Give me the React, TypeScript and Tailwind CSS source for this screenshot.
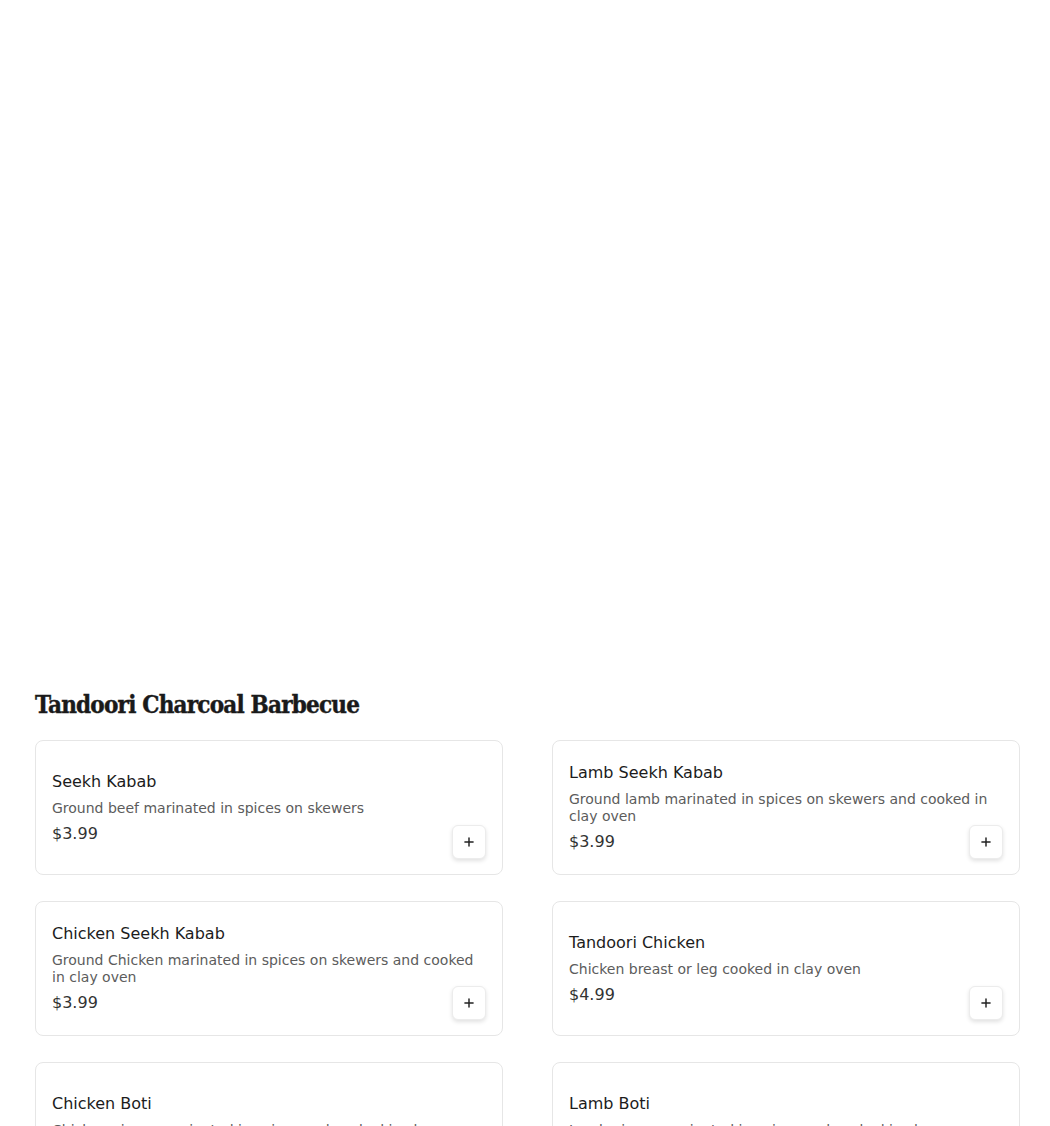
import React from "react";
import { Plus } from "lucide-react";

type Item = { name: string; desc: string; price: string };

const items: Item[] = [
  { name: "Seekh Kabab", desc: "Ground beef marinated in spices on skewers", price: "$3.99" },
  { name: "Lamb Seekh Kabab", desc: "Ground lamb marinated in spices on skewers and cooked in clay oven", price: "$3.99" },
  { name: "Chicken Seekh Kabab", desc: "Ground Chicken marinated in spices on skewers and cooked in clay oven", price: "$3.99" },
  { name: "Tandoori Chicken", desc: "Chicken breast or leg cooked in clay oven", price: "$4.99" },
  { name: "Chicken Boti", desc: "Chicken pieces marinated in spices and cooked in clay oven", price: "$5.99" },
  { name: "Lamb Boti", desc: "Lamb pieces marinated in spices and cooked in clay oven", price: "$6.99" },
];

const MenuCard: React.FC<{ item: Item }> = ({ item }) => (
  <div className="relative flex items-center min-h-[135px] rounded-lg border border-[#e6e6e6] bg-white px-4 py-[15px]">
    <div>
      <h3 className="text-[16px] leading-6 font-medium text-[#1c1c1c]">{item.name}</h3>
      <p className="mt-[6px] text-[14px] leading-[17px] text-[#5c5c5c]">{item.desc}</p>
      <p className="mt-[5px] text-[16px] leading-6 text-[#333]">{item.price}</p>
    </div>
    {/* add button sits over the card corner */}
    <button className="absolute right-4 bottom-[15px] w-[34px] h-[34px] flex items-center justify-center rounded-md border border-[#ececec] bg-white shadow-[0_2px_4px_rgba(0,0,0,0.12)] text-[#222]">
      <Plus className="w-3.5 h-3.5" strokeWidth={2.5} />
    </button>
  </div>
);

export default function App() {
  return (
    <div className="min-h-screen bg-white font-['DejaVu_Sans',sans-serif]">
      <div className="h-[689px]" />
      <section className="pl-[35px] pr-[30px]">
        <h2 className="font-['DejaVu_Serif',serif] font-stretch-condensed font-bold text-[24px] leading-8 text-[#1a1a1a] tracking-[-0.8px] [-webkit-text-stroke:0.4px_#1a1a1a] mb-[19px]">
          Tandoori Charcoal Barbecue
        </h2>
        <div className="grid grid-cols-2 gap-x-[49px] gap-y-[26px]">
          {items.map((it) => (
            <MenuCard key={it.name} item={it} />
          ))}
        </div>
      </section>
    </div>
  );
}
